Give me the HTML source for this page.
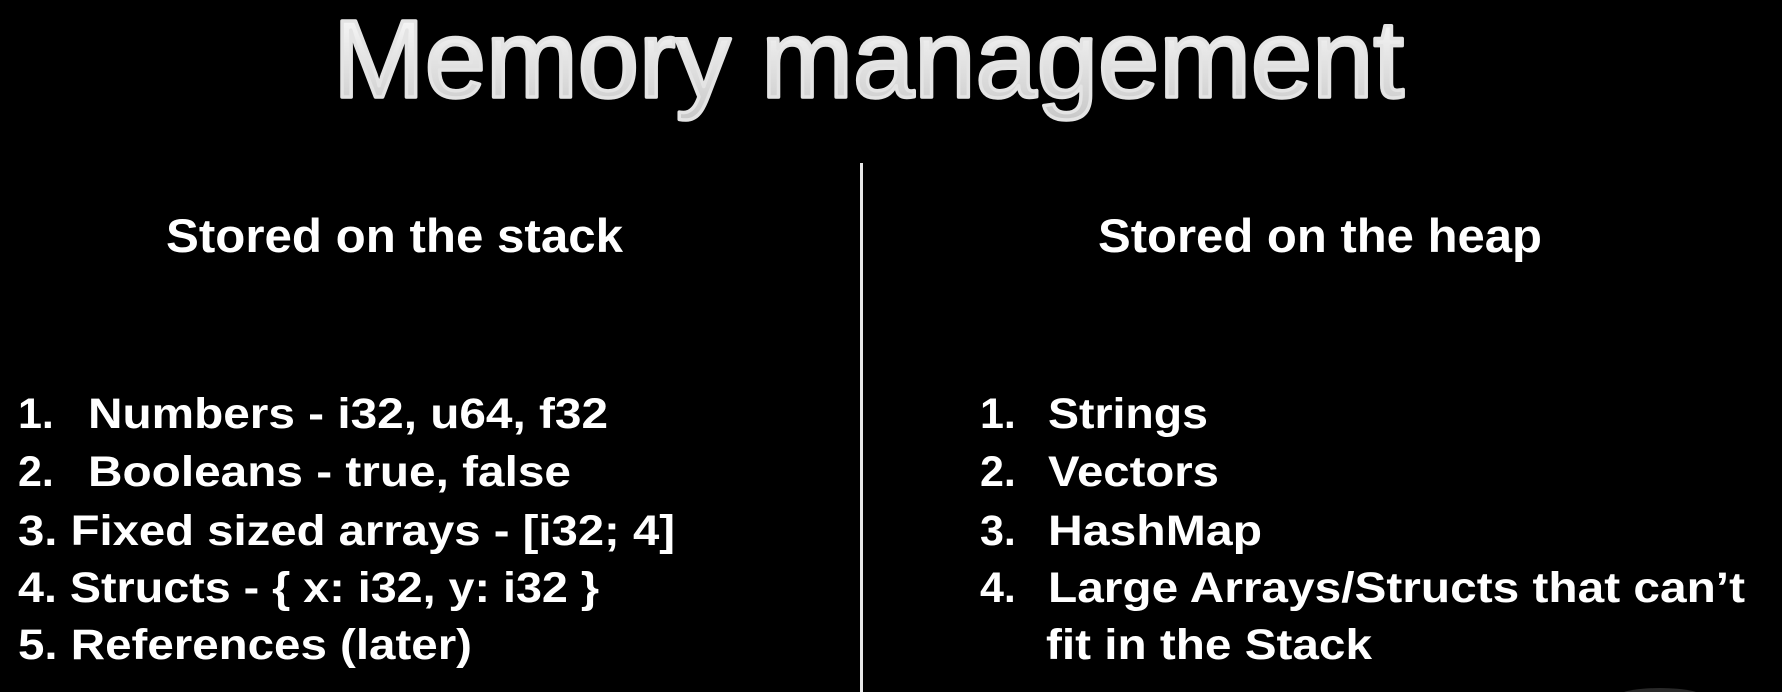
<!DOCTYPE html>
<html><head><meta charset="utf-8"><style>
html,body{margin:0;padding:0;background:#000;width:1782px;height:692px;overflow:hidden}
svg{display:block}
text{font-family:"Liberation Sans",Arial,sans-serif;fill:#fff}
.h{font-weight:bold;font-size:47px}
.i{font-weight:bold;font-size:43px}
</style></head><body>
<svg width="1782" height="692" viewBox="0 0 1782 692">
<defs><linearGradient id="g" x1="0" y1="0" x2="0" y2="1"><stop offset="0" stop-color="#ffffff"/><stop offset="1" stop-color="#c8c8c8"/></linearGradient></defs>
<text x="333" y="97" font-size="110" style="fill:url(#g)" stroke="#e4e4e4" stroke-width="3.5" stroke-linejoin="round" textLength="1071" lengthAdjust="spacingAndGlyphs">Memory management</text>
<rect x="860" y="163" width="3" height="529" fill="#e8e8e8"/>
<text class="h" x="166" y="252" textLength="457" lengthAdjust="spacingAndGlyphs">Stored  on the stack</text>
<text class="h" x="1098" y="252" textLength="444" lengthAdjust="spacingAndGlyphs">Stored  on the heap</text>
<g class="i">
<text class="i" x="18" y="428">1.</text><text class="i" x="88" y="428" textLength="520" lengthAdjust="spacingAndGlyphs">Numbers - i32, u64, f32</text>
<text class="i" x="18" y="486">2.</text><text class="i" x="88" y="486" textLength="483" lengthAdjust="spacingAndGlyphs">Booleans - true, false</text>
<text class="i" x="18" y="545" textLength="657" lengthAdjust="spacingAndGlyphs">3. Fixed sized arrays - [i32; 4]</text>
<text class="i" x="18" y="602" textLength="581" lengthAdjust="spacingAndGlyphs">4. Structs - { x: i32, y: i32 }</text>
<text class="i" x="18" y="659" textLength="454" lengthAdjust="spacingAndGlyphs">5. References (later)</text>
<text class="i" x="980" y="428">1.</text><text class="i" x="1048" y="428" textLength="160" lengthAdjust="spacingAndGlyphs">Strings</text>
<text class="i" x="980" y="486">2.</text><text class="i" x="1048" y="486" textLength="171" lengthAdjust="spacingAndGlyphs">Vectors</text>
<text class="i" x="980" y="545">3.</text><text class="i" x="1048" y="545" textLength="214" lengthAdjust="spacingAndGlyphs">HashMap</text>
<text class="i" x="980" y="602">4.</text><text class="i" x="1048" y="602" textLength="697" lengthAdjust="spacingAndGlyphs">Large Arrays/Structs that can’t</text>
<text class="i" x="1046" y="659" textLength="326" lengthAdjust="spacingAndGlyphs">fit in the Stack</text>
</g>
<ellipse cx="1660" cy="698" rx="45" ry="10" fill="#444" opacity="0.6"/>
</svg>
</body></html>
